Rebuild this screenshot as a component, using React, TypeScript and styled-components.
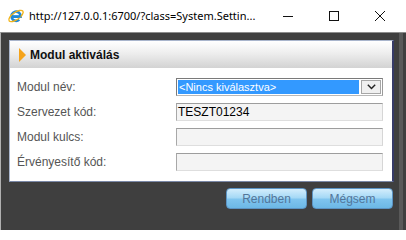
import React from "react";
import styled, { createGlobalStyle } from "styled-components";

const GlobalStyle = createGlobalStyle`
  html, body { margin: 0; padding: 0; background: #ffffff; }
  body { width: 406px; height: 230px; overflow: hidden; font-family: "Liberation Sans", Arial, sans-serif; }
  * { box-sizing: border-box; }
`;

const Window = styled.div`
  width: 406px;
  height: 230px;
  display: flex;
  flex-direction: column;
  background: #ffffff;
`;

const TitleBar = styled.div`
  height: 32px;
  flex: 0 0 32px;
  display: flex;
  align-items: center;
  padding-left: 7px;
  background: #ffffff;
`;

const AppIcon = styled.svg`
  width: 18px;
  height: 18px;
  flex: 0 0 18px;
  margin-top: -1px;
`;

const TitleText = styled.span`
  margin-left: 4px;
  font-family: "Noto Sans", "Open Sans", sans-serif;
  font-size: 11px;
  color: #000000;
  white-space: nowrap;
  flex: 1;
  margin-top: -1px;
`;

const Controls = styled.div`
  display: flex;
  height: 100%;
  margin-right: 3px;
`;

const ControlButton = styled.div`
  width: 46px;
  height: 100%;
  display: flex;
  align-items: center;
  justify-content: center;
  svg { width: 10px; height: 10px; display: block; margin-top: -1px; }
`;

const Frame = styled.div`
  flex: 1;
  display: flex;
  background: #3f3f3f;
  border-top: 1px solid #8c8c8c;
  border-left: 1px solid #b0b0b0;
`;

const FrameContent = styled.div`
  width: 393px;
  padding: 7px 1px 0 8px;
  display: flex;
  flex-direction: column;
`;

const FrameEdge = styled.div`
  flex: 1;
  display: flex;
  &::before {
    content: "";
    width: 5px;
  }
  &::after {
    content: "";
    width: 4px;
    background: #595959;
  }
`;

const Panel = styled.div`
  width: 385px;
  background: #ffffff;
  border: 1px solid #a9b5cc;
  border-right: 2px solid #363b68;
  border-bottom-color: #7a88a6;
  display: flex;
  flex-direction: column;
`;

const PanelHeader = styled.div`
  height: 27px;
  display: flex;
  align-items: center;
  padding-left: 9px;
  gap: 4px;
  background: linear-gradient(#ffffff 0%, #f0f0f0 40%, #d3d3d3 100%);
`;

const Arrow = styled.span`
  width: 0;
  height: 0;
  border-top: 7px solid transparent;
  border-bottom: 7px solid transparent;
  border-left: 7px solid #f5a31a;
`;

const HeaderTitle = styled.span`
  font-size: 12px;
  font-weight: bold;
  color: #111111;
`;

const Form = styled.div`
  display: grid;
  grid-template-columns: 159px 207px;
  grid-auto-rows: 18px;
  row-gap: 7px;
  padding: 10px 0 10px 7px;
`;

const Label = styled.div`
  font-size: 12px;
  color: #555555;
  display: flex;
  align-items: center;
`;

const SelectBox = styled.div`
  display: flex;
  align-items: stretch;
  border: 1px solid #7a7a7a;
  border-right-color: #9a9a9a;
  border-bottom-color: #b8b8b8;
  background: #ffffff;
  padding: 1px;
  gap: 2px;
`;

const SelectValue = styled.div`
  flex: 1;
  background: #3399ff;
  color: #ffffff;
  font-size: 11px;
  padding-left: 1px;
  display: flex;
  align-items: center;
`;

const SelectArrow = styled.div`
  width: 20px;
  background: #f0f0f0;
  border: 1px solid #a6a6a6;
  display: flex;
  align-items: center;
  justify-content: center;
  svg { width: 9px; height: 6px; display: block; }
`;

const TextInput = styled.div`
  border: 1px solid;
  border-color: #9d9d9d #d6d6d6 #dedede #a8a8a8;
  background: #f4f4f4;
  font-size: 12px;
  color: #000000;
  padding-left: 1px;
  display: flex;
  align-items: center;
`;

const ButtonRow = styled.div`
  display: flex;
  justify-content: flex-end;
  gap: 5px;
  margin-top: 6px;
`;

const ActionButton = styled.div`
  width: 81px;
  height: 21px;
  border: 1px solid #5c94c4;
  border-radius: 4px;
  background: linear-gradient(#d3edfc 0%, #a6d9f6 45%, #7fc4ee 55%, #6cb8e6 100%);
  color: #52769a;
  font-size: 12px;
  display: flex;
  align-items: center;
  justify-content: center;
`;

const IEIcon = () => (
  <AppIcon viewBox="0 0 18 18">
    <path
      d="M4.6 9.6 H13.6 A4.6 4.6 0 1 0 12.2 12.6"
      fill="none"
      stroke="#1e88d8"
      strokeWidth="2.6"
    />
    <ellipse
      cx="9"
      cy="9"
      rx="8.4"
      ry="3.6"
      transform="rotate(-35 9 9)"
      fill="none"
      stroke="#f2b418"
      strokeWidth="1.4"
    />
    <path d="M5 9.6 H13.6" stroke="#1e88d8" strokeWidth="2" />
  </AppIcon>
);

export default function App() {
  return (
    <>
      <GlobalStyle />
      <Window>
        <TitleBar>
          <IEIcon />
          <TitleText>http://127.0.0.1:6700/?class=System.Settin...</TitleText>
          <Controls>
            <ControlButton>
              <svg viewBox="0 0 10 10">
                <path d="M0 5.5 H10" stroke="#111" strokeWidth="1" />
              </svg>
            </ControlButton>
            <ControlButton>
              <svg viewBox="0 0 10 10">
                <rect x="0.5" y="0.5" width="9" height="9" fill="none" stroke="#111" strokeWidth="1" />
              </svg>
            </ControlButton>
            <ControlButton>
              <svg viewBox="0 0 10 10">
                <path d="M0 0 L10 10 M10 0 L0 10" stroke="#111" strokeWidth="1" />
              </svg>
            </ControlButton>
          </Controls>
        </TitleBar>
        <Frame>
          <FrameContent>
            <Panel>
              <PanelHeader>
                <Arrow />
                <HeaderTitle>Modul aktiválás</HeaderTitle>
              </PanelHeader>
              <Form>
                <Label>Modul név:</Label>
                <SelectBox>
                  <SelectValue>&lt;Nincs kiválasztva&gt;</SelectValue>
                  <SelectArrow>
                    <svg viewBox="0 0 9 6">
                      <path d="M0.8 0.8 L4.5 4.6 L8.2 0.8" fill="none" stroke="#222" strokeWidth="1.4" />
                    </svg>
                  </SelectArrow>
                </SelectBox>
                <Label>Szervezet kód:</Label>
                <TextInput>TESZT01234</TextInput>
                <Label>Modul kulcs:</Label>
                <TextInput />
                <Label>Érvényesítő kód:</Label>
                <TextInput />
              </Form>
            </Panel>
            <ButtonRow>
              <ActionButton>Rendben</ActionButton>
              <ActionButton>Mégsem</ActionButton>
            </ButtonRow>
          </FrameContent>
          <FrameEdge />
        </Frame>
      </Window>
    </>
  );
}
